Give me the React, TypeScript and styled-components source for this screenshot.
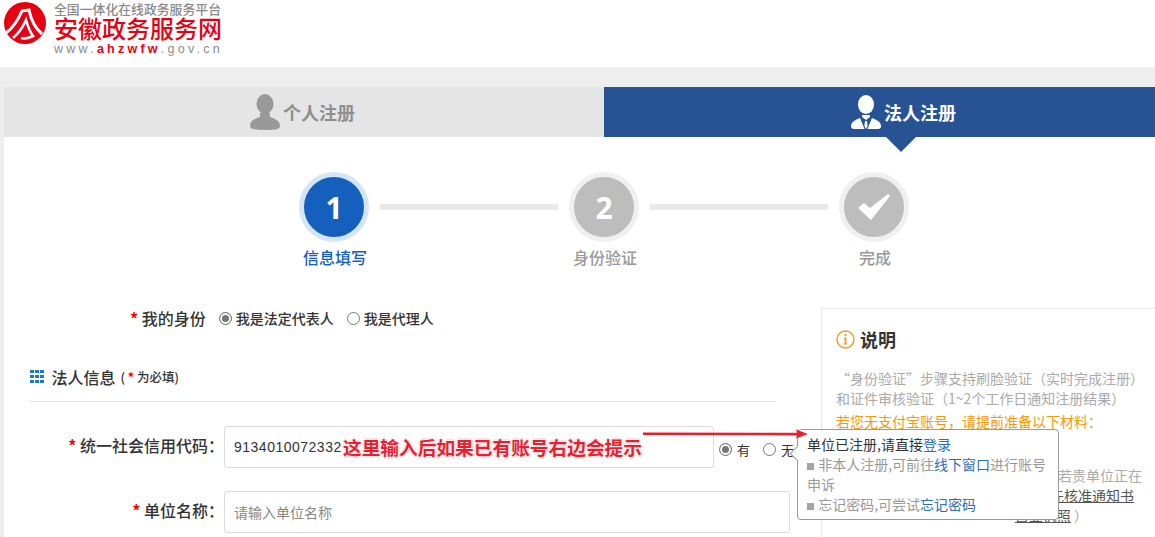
import React from "react";
import styled, { createGlobalStyle } from "styled-components";

const GlobalStyle = createGlobalStyle`
  html, body {
    margin: 0;
    padding: 0;
    height: 537px;
    overflow: hidden;
    background: #eeeeee;
    font-family: "Noto Sans CJK SC", "Liberation Sans", sans-serif;
  }
  * { box-sizing: border-box; }
`;

const LogoMark = () => (
  <svg width="46" height="46" viewBox="0 0 46 46">
    <circle cx="23" cy="23" r="21" fill="#e60012" />
    <path d="M4 33 C11 28 16 20 20 11 L27 10 C29 20 34 29 40 34" fill="none" stroke="#fff" strokeWidth="3" />
    <path d="M11 38 C17 33 21 27 24 20 C26 27 28 32 31 36 C27 38 23 39 19 38" fill="none" stroke="#fff" strokeWidth="2.6" />
  </svg>
);

const PersonIcon = () => (
  <svg width="30" height="36" viewBox="0 0 30 36">
    <ellipse cx="15" cy="10" rx="8.5" ry="10" fill="#999" />
    <path d="M10 19 L20 19 L20 23 C26 25 30 27 30 32 C30 35 26 36 15 36 C4 36 0 35 0 32 C0 27 4 25 10 23 Z" fill="#999" />
  </svg>
);

const BusinessIcon = () => (
  <svg width="30" height="35" viewBox="0 0 30 35">
    <ellipse cx="15" cy="9.5" rx="8" ry="9.5" fill="#fff" />
    <path d="M11 20 L19 20 L19 22 L15 25 L11 22 Z" fill="#fff" />
    <path d="M9 23 L13.5 34 L3 34 C1 34 0 33 0 31.5 C0 27 4 25 9 23 Z" fill="#fff" />
    <path d="M21 23 L16.5 34 L27 34 C29 34 30 33 30 31.5 C30 27 26 25 21 23 Z" fill="#fff" />
    <path d="M14 26 L16 26 L16.6 31 L15 34 L13.4 31 Z" fill="#fff" />
  </svg>
);

const CheckIcon = () => (
  <svg width="32" height="26" viewBox="0 0 32 26">
    <path d="M0 14 L6 9 L12 14 L30 0 L32 2 L13 26 Z" fill="#fff" />
  </svg>
);

const InfoIcon = () => (
  <svg width="19" height="19" viewBox="0 0 19 19">
    <circle cx="9.5" cy="9.5" r="8.5" fill="none" stroke="#f39a1e" strokeWidth="1.4" />
    <rect x="8.6" y="4" width="1.8" height="2" fill="#f39a1e" />
    <path d="M7.8 7.6 H10.4 V13.4 H11.6 V14.6 H7.4 V13.4 H8.6 V8.8 H7.8 Z" fill="#f39a1e" />
  </svg>
);

const GridIcon = () => (
  <DotGrid>
    {Array.from({ length: 9 }).map((_, i) => (
      <i key={i} />
    ))}
  </DotGrid>
);

const App: React.FC = () => {
  return (
    <>
      <GlobalStyle />
      <Header>
        <LogoMark />
        <LogoText>
          <LogoTop>全国一体化在线政务服务平台</LogoTop>
          <LogoName>安徽政务服务网</LogoName>
          <LogoUrl>
            www.<b>ahzwfw</b>.gov.cn
          </LogoUrl>
        </LogoText>
      </Header>

      <Page>
        <Tabs>
          <Tab>
            <PersonIcon />
            个人注册
          </Tab>
          <Tab active>
            <BusinessIcon />
            法人注册
          </Tab>
        </Tabs>

        <Content>
          <Steps>
            <Step>
              <Circle active>1</Circle>
              <StepLabel active>信息填写</StepLabel>
            </Step>
            <StepLine />
            <Step>
              <Circle>2</Circle>
              <StepLabel>身份验证</StepLabel>
            </Step>
            <StepLine />
            <Step>
              <Circle>
                <CheckIcon />
              </Circle>
              <StepLabel>完成</StepLabel>
            </Step>
          </Steps>

          <Body>
            <FormColumn>
              <IdentityRow>
                <IdentityLabel>
                  <Star>*</Star> 我的身份
                </IdentityLabel>
                <Radio checked />
                <IdentityOption>我是法定代表人</IdentityOption>
                <Radio />
                <IdentityOption>我是代理人</IdentityOption>
              </IdentityRow>

              <SectionTitle>
                <GridIcon />
                <span>法人信息</span>
                <SectionHint>
                  ( <Star>*</Star> 为必填)
                </SectionHint>
              </SectionTitle>

              <FormRow>
                <FieldLabel>
                  <Star>*</Star> 统一社会信用代码：
                </FieldLabel>
                <FieldBox width={490}>
                  <FieldValue>9134010072332</FieldValue>
                  <Annotation>这里输入后如果已有账号右边会提示</Annotation>
                </FieldBox>
                <RadioGroup>
                  <Radio checked />
                  <RadioText>有</RadioText>
                  <Radio />
                  <RadioText>无</RadioText>
                </RadioGroup>
              </FormRow>

              <FormRow>
                <FieldLabel>
                  <Star>*</Star> 单位名称：
                </FieldLabel>
                <FieldBox width={566}>
                  <Placeholder>请输入单位名称</Placeholder>
                </FieldBox>
              </FormRow>
            </FormColumn>

            <SidePanel>
              <SideTitle>
                <InfoIcon />
                说明
              </SideTitle>
              <SideText>
                “身份验证”步骤支持刷脸验证（实时完成注册）和证件审核验证（1~2个工作日通知注册结果）
              </SideText>
              <SideNotice>若您无支付宝账号，请提前准备以下材料：</SideNotice>
              <SideRest>
                <SideLine end={306}>若贵单位正在</SideLine>
                <SideLine end={298}>
                  <u>名称预先核准通知书</u>
                </SideLine>
                <SideLine end={252}>
                  <u>营业执照</u> ）
                </SideLine>
              </SideRest>
            </SidePanel>

            <Arrow>
              <svg width="166" height="12" viewBox="0 0 166 12">
                <path d="M0 4.5 L154 4.8 L153 1.5 L165 6 L153 10.5 L154 7.4 L0 7 Z" fill="#e8202e" />
              </svg>
            </Arrow>

            <Tooltip>
              <TooltipLead>
                单位已注册,请直接<a>登录</a>
              </TooltipLead>
              <TooltipLine>
                <Bullet /> 非本人注册,可前往<a>线下窗口</a>进行账号申诉
              </TooltipLine>
              <TooltipLine>
                <Bullet /> 忘记密码,可尝试<a>忘记密码</a>
              </TooltipLine>
            </Tooltip>
          </Body>
        </Content>
      </Page>
    </>
  );
};

const Header = styled.header`
  height: 67px;
  background: #fff;
  display: flex;
  align-items: flex-start;
  padding: 0 0 0 2px;
  gap: 6px;
`;

const LogoText = styled.div`
  display: flex;
  flex-direction: column;
  width: 170px;
`;

const LogoTop = styled.div`
  font-size: 12.85px;
  line-height: 15px;
  color: #8a8a8a;
  font-weight: 500;
  white-space: nowrap;
  margin-top: 1px;
`;

const LogoName = styled.div`
  font-size: 24px;
  line-height: 24px;
  font-weight: 500;
  color: #e60012;
  white-space: nowrap;
`;

const LogoUrl = styled.div`
  font-family: "Liberation Sans", sans-serif;
  font-size: 12.5px;
  line-height: 13px;
  letter-spacing: 3.25px;
  margin-top: 3px;
  color: #8a8a8a;
  white-space: nowrap;

  b {
    color: #e60012;
  }
`;

const Page = styled.main`
  padding: 20px 0 0 4px;
`;

const Tabs = styled.div`
  display: flex;
  height: 50px;
`;

const Tab = styled.div<{ active?: boolean }>`
  position: relative;
  flex: ${({ active }) => (active ? "1" : "0 0 600px")};
  display: flex;
  align-items: center;
  justify-content: center;
  gap: 3px;
  padding-left: ${({ active }) => (active ? "48px" : "0")};
  padding-right: ${({ active }) => (active ? "0" : "3px")};
  background: ${({ active }) => (active ? "#275395" : "#e5e5e5")};
  color: ${({ active }) => (active ? "#fff" : "#8e8e8e")};
  font-size: 18px;
  font-weight: 700;

  &::after {
    content: "";
    display: ${({ active }) => (active ? "block" : "none")};
    position: absolute;
    left: 282px;
    top: 50px;
    border-style: solid;
    border-width: 15px 15px 0;
    border-color: #275395 transparent transparent;
  }
`;

const Content = styled.div`
  background: #fff;
  height: 400px;
`;

const Steps = styled.div`
  display: flex;
  justify-content: flex-start;
  align-items: flex-start;
  padding: 35px 0 0 295px;
`;

const Step = styled.div`
  width: 70px;
  display: flex;
  flex-direction: column;
  align-items: center;
`;

const Circle = styled.div<{ active?: boolean }>`
  width: 70px;
  height: 70px;
  border-radius: 50%;
  display: flex;
  align-items: center;
  justify-content: center;
  background: ${({ active }) => (active ? "#1560bd" : "#bdbdbd")};
  border: 5px solid ${({ active }) => (active ? "#d4e5f5" : "#f0f0f0")};
  color: #fff;
  font-family: "Open Sans", sans-serif;
  font-size: 30px;
  font-weight: 700;
`;

const StepLabel = styled.div<{ active?: boolean }>`
  margin-top: 3px;
  padding-left: 2px;
  font-size: 16px;
  line-height: 24px;
  font-weight: 500;
  white-space: nowrap;
  color: ${({ active }) => (active ? "#1560bd" : "#999")};
`;

const StepLine = styled.div`
  width: 178px;
  height: 6px;
  margin: 32px 11px 0;
  background: #e9e9e9;
`;

const Body = styled.div`
  position: relative;
  display: grid;
  grid-template-columns: 817px 1fr;
  margin-top: 39px;
`;

const FormColumn = styled.div`
  padding: 0 0 0 25px;
`;

const IdentityRow = styled.div`
  display: flex;
  align-items: center;
  height: 20px;
  padding-left: 101px;
`;

const IdentityLabel = styled.div`
  font-size: 16px;
  font-weight: 500;
  color: #333;
  margin-right: 13px;
  white-space: nowrap;
`;

const IdentityOption = styled.span`
  font-size: 14px;
  font-weight: 500;
  color: #333;
  margin: 0 13px 0 4px;
  white-space: nowrap;
`;

const Star = styled.span`
  color: #f00;
  font-weight: 700;
`;

const Radio = styled.span<{ checked?: boolean }>`
  display: inline-block;
  width: 13px;
  height: 13px;
  flex: none;
  border-radius: 50%;
  border: 1px solid #767676;
  background: ${({ checked }) => (checked ? "#767676" : "#fff")};
  box-shadow: ${({ checked }) => (checked ? "inset 0 0 0 2px #fff" : "none")};
`;

const SectionTitle = styled.div`
  display: flex;
  align-items: center;
  width: 747px;
  height: 45px;
  margin-top: 29px;
  gap: 8px;
  border-bottom: 1px solid #e5e5e5;
  padding-bottom: 5px;
  font-size: 16px;
  font-weight: 500;
  color: #333;
`;

const DotGrid = styled.span`
  display: grid;
  grid-template-columns: repeat(3, 3.5px);
  grid-auto-rows: 3.5px;
  gap: 1.5px;
  margin-left: 1px;

  i {
    background: #1a7bc9;
  }
`;

const SectionHint = styled.span`
  font-size: 12.5px;
  margin-left: -3px;
`;

const FormRow = styled.div`
  display: flex;
  align-items: center;
  margin-top: 24px;
  height: 42px;
  & + & {
    margin-top: 23px;
  }
`;

const FieldLabel = styled.div`
  width: 195px;
  flex: none;
  padding-bottom: 4px;
  text-align: right;
  font-size: 16px;
  font-weight: 500;
  color: #333;
  white-space: nowrap;
`;

const FieldBox = styled.div<{ width: number }>`
  position: relative;
  width: ${({ width }) => width}px;
  flex: none;
  height: 42px;
  display: flex;
  align-items: center;
  padding-left: 9px;
  background: #fff;
  border: 1px solid #dcdcdc;
  border-radius: 3px;
`;

const FieldValue = styled.span`
  font-family: "Liberation Sans", sans-serif;
  font-size: 14px;
  letter-spacing: 0.5px;
  color: #333;
`;

const Placeholder = styled.span`
  font-size: 14px;
  color: #888;
`;

const Annotation = styled.span`
  position: absolute;
  left: 118px;
  top: 8px;
  font-size: 18.7px;
  line-height: 24px;
  font-weight: 700;
  color: #ee1c2e;
  white-space: nowrap;
  text-shadow: 0 0 3px #fff, 2px 0 1px #e4e4e4, -2px 0 1px #e4e4e4, 0 2px 1px #e4e4e4, 0 -2px 1px #e4e4e4;
`;

const RadioGroup = styled.div`
  display: flex;
  align-items: center;
  margin-left: 5px;
  padding-top: 4px;
`;

const RadioText = styled.span`
  font-size: 13px;
  color: #333;
  margin: 0 13px 0 5px;
`;

const SidePanel = styled.aside`
  height: 240px;
  padding: 17px 0 0 14px;
  border: 1px solid #e8e8e8;
  border-right: none;
  border-bottom: none;
  overflow: hidden;
`;

const SideTitle = styled.div`
  display: flex;
  align-items: center;
  gap: 5px;
  font-size: 18px;
  font-weight: 700;
  line-height: 26px;
  color: #333;
`;

const SideText = styled.p`
  margin: 16px 0 0;
  width: 310px;
  font-size: 14px;
  line-height: 20px;
  color: #aaa;
`;

const SideNotice = styled.div`
  margin-top: 3px;
  font-size: 14px;
  line-height: 20px;
  color: #f59a0c;
`;

const SideRest = styled.div`
  margin-top: 34px;
  font-size: 14px;
  line-height: 20px;
  color: #aaa;
`;

const SideLine = styled.div<{ end: number }>`
  width: ${({ end }) => end}px;
  text-align: right;
  white-space: nowrap;

  u {
    color: #555;
  }
`;

const Arrow = styled.div`
  position: absolute;
  left: 639px;
  top: 120px;
  line-height: 0;
  z-index: 3;
`;

const Tooltip = styled.div`
  position: absolute;
  left: 793px;
  top: 121px;
  width: 262px;
  height: 91px;
  padding: 4px 8px 0 9px;
  background: #fff;
  border: 1px solid #9a9a9a;
  border-radius: 4px;
  font-size: 14px;
  line-height: 20px;
  z-index: 2;

  &::before {
    content: "";
    position: absolute;
    left: -6px;
    top: 18px;
    width: 10px;
    height: 10px;
    background: #fff;
    border-left: 1px solid #9a9a9a;
    border-bottom: 1px solid #9a9a9a;
    transform: rotate(45deg);
  }

  a {
    color: #2a70b5;
  }
`;

const TooltipLead = styled.div`
  color: #333;
`;

const TooltipLine = styled.div`
  color: #999;
`;

const Bullet = styled.span`
  display: inline-block;
  width: 7px;
  height: 7px;
  background: #a5a5a5;
  margin-right: 1px;
`;

export default App;
